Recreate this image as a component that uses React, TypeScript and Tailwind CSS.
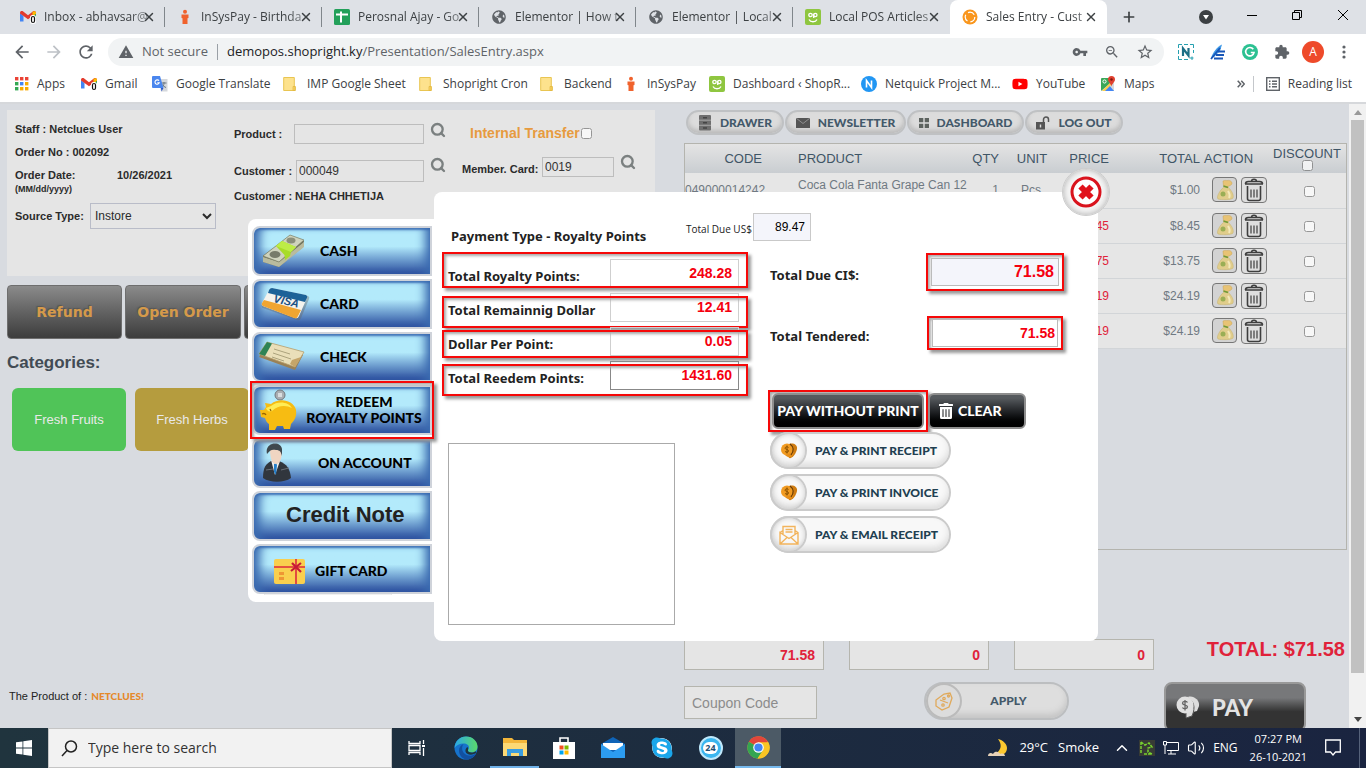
import type { ReactNode } from "react";
import { Search, X, Plus, ChevronUp, Volume2 } from "lucide-react";
import { FaSkype, FaTrashAlt, FaYoutube, FaGlobeAmericas } from "react-icons/fa";
import {
  MdArrowBack,
  MdArrowForward,
  MdExtension,
  MdRefresh,
  MdStarBorder,
  MdVpnKey,
  MdWarning,
  MdZoomOut,
} from "react-icons/md";

const ui = "font-['Open_Sans',sans-serif]";
const label = "font-['Lato',sans-serif] font-black";

/* ---------- favicons ---------- */

function GmailIcon() {
  return (
    <svg viewBox="0 0 16 16" className="size-4 shrink-0" aria-hidden="true">
      <path d="M0 4v8.500h3.500V7z" fill="#4285f4" />
      <path d="M12.500 7v5.500H16V4z" fill="#34a853" />
      <path d="M0 4.500V4c0-2 2-2.300 3.200-1.400L8 6.200l4.800-3.600C14 1.700 16 2 16 4v.5L8 10.300z" fill="#e33b2e" />
      <path d="M12.500 2.800C14 1.700 16 2 16 4v.7l-3.500 2.600z" fill="#fbbc04" />
      <rect x="10" y="6" width="6" height="9" rx="2.500" fill="#fff" />
      <rect x="11.500" y="7.500" width="3" height="6" rx="1.500" fill="none" stroke="#111" strokeWidth="1.200" />
    </svg>
  );
}

function PersonIcon() {
  return (
    <svg viewBox="0 0 16 16" className="size-4 shrink-0" aria-hidden="true">
      <circle cx="8" cy="2.800" r="2" fill="#f0622d" />
      <path d="M4.500 5.500h7v3.500l-1 .3V15h-5V9.300l-1-.3z" fill="#f0622d" />
    </svg>
  );
}

function SheetIcon() {
  return (
    <svg viewBox="0 0 16 16" className="size-4 shrink-0" aria-hidden="true">
      <rect width="16" height="16" rx="1.500" fill="#23a05a" />
      <path d="M2 5.500h12M7 2.500v11" stroke="#fff" strokeWidth="2" />
    </svg>
  );
}

function OpIcon() {
  return (
    <svg viewBox="0 0 16 16" className="size-4 shrink-0" aria-hidden="true">
      <rect width="16" height="16" rx="2" fill="#8fc640" />
      <circle cx="5.500" cy="6" r="1.700" fill="none" stroke="#fff" strokeWidth="1.300" />
      <circle cx="10.300" cy="6" r="1.700" fill="none" stroke="#fff" strokeWidth="1.300" />
      <path d="M8.700 5v4M4 10.500c1.500 3 6.500 3 8 0" stroke="#fff" strokeWidth="1.300" fill="none" />
    </svg>
  );
}

function SalesIcon() {
  return (
    <svg viewBox="0 0 16 16" className="size-4 shrink-0" aria-hidden="true">
      <circle cx="8" cy="8" r="7.500" fill="#f9961d" />
      <circle cx="8" cy="8" r="4.800" fill="none" stroke="#fff" strokeWidth="1.200" strokeDasharray="7 3" />
    </svg>
  );
}

function TranslateIcon() {
  return (
    <svg viewBox="0 0 16 16" className="size-4 shrink-0" aria-hidden="true">
      <path d="M6 3h9.500v12.500H9z" fill="#d5d8dc" />
      <path d="M9.500 7h5M12 6v1c0 2-1 4-2.500 5M10.500 8.500c.8 1.500 2 2.500 3.500 3" stroke="#6b7680" fill="none" />
      <path d="M1 0h7l3.500 12H1a1 1 0 0 1-1-1V1a1 1 0 0 1 1-1z" fill="#4a86ee" />
      <path d="M9 12h2.500L9.500 15.500z" fill="#2a56c6" />
      <path d="M7 4.800A2.200 2.200 0 1 0 7.300 6.700H5.300" stroke="#fff" strokeWidth="1.100" fill="none" />
    </svg>
  );
}

function FolderIcon() {
  return (
    <svg viewBox="0 0 16 16" className="size-4 shrink-0" aria-hidden="true">
      <path d="M.7 1.500h10.600v9h1v4H.7z" fill="#fde28d" stroke="#e9c552" />
      <path d="M10 14.500v-4h2v4z" fill="#fbd565" stroke="#e0b53c" strokeWidth=".7" />
    </svg>
  );
}

function AppsIcon() {
  const colors = ["#ea4335", "#ea4335", "#ea4335", "#34a853", "#4285f4", "#f9ab00", "#34a853", "#f9ab00", "#f9ab00"];
  return (
    <svg viewBox="0 0 14 14" className="size-3.5 shrink-0" aria-hidden="true">
      {colors.map((c, i) => (
        <rect key={i} x={(i % 3) * 5} y={Math.floor(i / 3) * 5} width="3.400" height="3.400" fill={c} />
      ))}
    </svg>
  );
}

function MapsIcon() {
  return (
    <svg viewBox="0 0 16 16" className="size-4 shrink-0" aria-hidden="true">
      <rect x="1" y="2" width="13" height="13" rx="1" fill="#3aa757" />
      <path d="M1 15 14 4v10a1 1 0 0 1-1 1z" fill="#d6d9dc" />
      <path d="M4 15 9 9l5 6z" fill="#4285f4" />
      <path d="m2 15 10-10 1.500 1.500L5 15z" fill="#fbcf4a" />
      <circle cx="4.500" cy="5.500" r="1.600" fill="none" stroke="#fff" />
      <path d="M11.500 0a3.500 3.500 0 0 1 3.500 3.500c0 2.500-3 4-3.500 7-.5-3-3.500-4.500-3.500-7A3.500 3.500 0 0 1 11.500 0z" fill="#e0402f" />
      <circle cx="11.500" cy="3.500" r="1.200" fill="#7b1710" />
    </svg>
  );
}

function NIcon() {
  return (
    <svg viewBox="0 0 16 16" className="size-4 shrink-0" aria-hidden="true">
      <circle cx="8" cy="8" r="8" fill="#2196f3" />
      <path d="M5.500 11.500v-7l5 7v-7" stroke="#fff" strokeWidth="1.600" fill="none" />
    </svg>
  );
}

/* ---------- browser chrome ---------- */

const globe = <FaGlobeAmericas className="size-4 shrink-0 p-px text-[#5f6368]" />;

const tabs: { title: string; icon: ReactNode }[] = [
  { title: "Inbox - abhavsar@", icon: <GmailIcon /> },
  { title: "InSysPay - Birthda", icon: <PersonIcon /> },
  { title: "Perosnal Ajay - Go", icon: <SheetIcon /> },
  { title: "Elementor | How t", icon: globe },
  { title: "Elementor | Local", icon: globe },
  { title: "Local POS Articles", icon: <OpIcon /> },
  { title: "Sales Entry - Cust", icon: <SalesIcon /> },
];

function TabStrip() {
  return (
    <div className="flex h-[34px] items-end bg-[#dee1e6] pl-2">
      {tabs.map((t, i) => {
        const active = i === tabs.length - 1;
        return (
          <div key={t.title} className={`flex h-full w-[157px] items-center ${active ? "rounded-t-lg bg-white" : ""}`}>
            <div
              className={`flex h-5 flex-1 items-center border-r pr-2 pl-3 ${
                i < tabs.length - 2 ? "border-[#80868b]" : "border-transparent"
              }`}
            >
              {t.icon}
              <span className="ml-2 flex-1 text-xs whitespace-nowrap text-[#3c4043] [mask-image:linear-gradient(to_right,#000_75%,#0003)]">
                {t.title}
              </span>
              <button aria-label="Close tab" className="-ml-4 text-[#3c4043]">
                <X className="size-3.5" strokeWidth={2.500} />
              </button>
            </div>
          </div>
        );
      })}
      <button aria-label="New tab" className="h-full pl-3.5 text-[#3c4043]">
        <Plus className="size-4" strokeWidth={2.500} />
      </button>
      <div className="ml-auto flex h-full items-center gap-[34px] pr-[17px] pb-1 text-black">
        <svg viewBox="0 0 14 14" className="mt-1 size-3.5" aria-hidden="true">
          <circle cx="7" cy="7" r="7" fill="#3c4043" />
          <path d="M4 5h6l-3 4.500z" fill="#fff" />
        </svg>
        <button aria-label="Minimise" className="h-px w-2.5 bg-black" />
        <button aria-label="Restore">
          <svg viewBox="0 0 12 12" className="size-3" fill="none" stroke="#000">
            <path d="M1.500 3.500h7v7h-7zM3.500 3.500v-2h7v7h-2" />
          </svg>
        </button>
        <button aria-label="Close">
          <svg viewBox="0 0 12 12" className="size-3" stroke="#000">
            <path d="m1 1 10 10M11 1 1 11" />
          </svg>
        </button>
      </div>
    </div>
  );
}

function Toolbar() {
  return (
    <div className="flex h-9 items-center bg-white pr-4 pl-3 text-[#5f6368]">
      <div className="flex w-24 items-center gap-3">
        <button aria-label="Back">
          <MdArrowBack className="size-5" />
        </button>
        <button aria-label="Forward" className="text-[#bdc1c6]">
          <MdArrowForward className="size-5" />
        </button>
        <button aria-label="Reload">
          <MdRefresh className="size-5" />
        </button>
      </div>
      <div className="flex h-7 flex-1 items-center rounded-full bg-[#f1f3f4] px-2.5 text-[13px]">
        <MdWarning className="size-4" />
        <span className="ml-2">Not secure</span>
        <span className="mx-[9px] h-4 w-px bg-[#9aa0a6]" />
        <span className="text-[#202124]">demopos.shopright.ky</span>
        <span>/Presentation/SalesEntry.aspx</span>
        <span className="ml-auto flex items-center gap-4">
          <MdVpnKey className="size-4" />
          <MdZoomOut className="size-4" />
          <MdStarBorder className="size-[18px]" />
        </span>
      </div>
      <div className="flex items-center gap-4 pl-3.5">
        <svg viewBox="0 0 16 16" className="size-4" aria-hidden="true">
          <path d="M.5 4V.5H4M6 .5h4M12 .5h3.500V4M15.500 6v3M.5 6v4M.5 12v3.500H4M6 15.500h4M12 14h3.500M14 12.500V16" fill="none" stroke="#25a0b0" />
          <path d="M5 12V4.500l5.500 7V4" stroke="#1d6f86" strokeWidth="2.200" fill="none" />
        </svg>
        <svg viewBox="0 0 16 16" className="size-4" aria-hidden="true">
          <path d="M1 14C3 8 7 3 12 .5L10 7l-6 6z" fill="#3f9ae8" />
          <path d="M4 14.500h9M6 11h8M8 7.500h7M1 15 10 4" stroke="#1856b8" strokeWidth="1.800" />
        </svg>
        <svg viewBox="0 0 16 16" className="size-4" aria-hidden="true">
          <circle cx="8" cy="8" r="8" fill="#2cc192" />
          <path d="M11.300 5.200A4.200 4.200 0 1 0 12 8.500H8.800" stroke="#fff" strokeWidth="1.600" fill="none" />
        </svg>
        <MdExtension className="size-4" />
        <span className="-mx-1 flex size-[22px] items-center justify-center rounded-full bg-[#ee4a2a] text-xs text-white">A</span>
        <svg viewBox="0 0 4 14" className="mr-1 ml-1.5 h-3.5 w-1" fill="#5f6368" aria-hidden="true">
          <circle cx="2" cy="2" r="1.600" />
          <circle cx="2" cy="7" r="1.600" />
          <circle cx="2" cy="12" r="1.600" />
        </svg>
      </div>
    </div>
  );
}

const bookmarks: { name: string; icon: ReactNode; width: string }[] = [
  { name: "Apps", icon: <AppsIcon />, width: "w-[66px]" },
  { name: "Gmail", icon: <GmailIcon />, width: "w-[71px]" },
  { name: "Google Translate", icon: <TranslateIcon />, width: "w-[131px]" },
  { name: "IMP Google Sheet", icon: <FolderIcon />, width: "w-[136px]" },
  { name: "Shopright Cron", icon: <FolderIcon />, width: "w-[121px]" },
  { name: "Backend", icon: <FolderIcon />, width: "w-[83px]" },
  { name: "InSysPay", icon: <PersonIcon />, width: "w-[86px]" },
  { name: "Dashboard ‹ ShopR...", icon: <OpIcon />, width: "w-[152px]" },
  { name: "Netquick Project M...", icon: <NIcon />, width: "w-[151px]" },
  { name: "YouTube", icon: <FaYoutube className="size-4 shrink-0 text-[#f00]" />, width: "w-[88px]" },
  { name: "Maps", icon: <MapsIcon />, width: "w-[60px]" },
];

function Bookmarks() {
  return (
    <nav className="flex h-[34px] items-center border-b-2 border-[#d6d8db] bg-white pb-1 pl-[15px] text-xs whitespace-nowrap text-[#3c4043]">
      {bookmarks.map((b) => (
        <a key={b.name} href="#" className={`flex items-center gap-2 ${b.width}`}>
          {b.icon}
          {b.name}
        </a>
      ))}
      <div className="ml-auto flex items-center gap-2 pr-3.5">
        <svg viewBox="0 0 8 8" className="size-2" fill="none" stroke="#5f6368" strokeWidth="1.500" aria-hidden="true">
          <path d="m.7.7 3 3.300-3 3.300M4.300.7l3 3.300-3 3.300" />
        </svg>
        <span className="h-4 w-px bg-[#c4c7cb]" />
        <svg viewBox="0 0 14 14" className="ml-1 size-3.5" fill="none" stroke="#5f6368" strokeWidth="1.400" aria-hidden="true">
          <rect x=".7" y=".7" width="12.600" height="12.600" />
          <path d="M3 4.200h1.500M6 4.200h5M3 7h1.500M6 7h5M3 9.800h1.500M6 9.800h5" />
        </svg>
        <span>Reading list</span>
      </div>
    </nav>
  );
}

/* ---------- left part of the sales page ---------- */

const field = "border border-[#bdbdbd] bg-[#e5e5e5] px-0.5 text-xs font-normal text-[#333]";

function Magnifier() {
  return (
    <button aria-label="Search" className="text-[#7b8080]">
      <Search className="size-4" strokeWidth={3.500} />
    </button>
  );
}

function OrderPanel() {
  return (
    <section className="flex h-[166px] bg-[#e5e5e5] pl-2 text-[11px] font-bold text-[#2b2b2b]">
      <div className="w-[219px] pt-2">
        <p className="leading-[23px]">Staff : Netclues User</p>
        <p className="leading-[23px]">Order No : 002092</p>
        <p className="flex leading-[23px]">
          <span className="w-[102px]">Order Date:</span>10/26/2021
        </p>
        <p className="text-[9px] leading-1">(MM/dd/yyyy)</p>
        <div className="mt-3 flex items-center">
          <label htmlFor="source" className="w-[75px]">
            Source Type:
          </label>
          <select id="source" className="h-[26px] w-[126px] border border-[#b9bcc8] bg-[#e5e5e5] text-xs font-normal" defaultValue="Instore">
            <option>Instore</option>
          </select>
        </div>
      </div>
      <div className="w-[228px] pt-3.5">
        <div className="flex h-5 items-center justify-between pr-4">
          <label htmlFor="product" className="w-[58px]">
            Product :
          </label>
          <input id="product" className={`h-5 w-[130px] ${field}`} />
          <span className="flex pb-2 pl-1">
            <Magnifier />
          </span>
        </div>
        <div className="mt-4 flex h-[22px] items-center justify-between pr-4">
          <label htmlFor="customer" className="w-[60px]">
            Customer :
          </label>
          <input id="customer" defaultValue="000049" className={`h-[22px] w-[128px] ${field}`} />
          <span className="flex pb-3 pl-1">
            <Magnifier />
          </span>
        </div>
        <p className="mt-1.5 leading-[17px]">Customer : NEHA CHHETIJA</p>
      </div>
      <div className="pt-3.5">
        <label className="flex h-[18px] items-center gap-px pl-2 text-sm text-[#e79b3f]">
          Internal Transfer
          <input type="checkbox" className="size-[11px] opacity-70" />
        </label>
        <div className="mt-3 flex items-center">
          <label htmlFor="member" className="w-20 pt-1">
            Member. Card:
          </label>
          <input id="member" defaultValue="0019" className={`h-5 w-[72px] ${field}`} />
          <span className="flex pb-2.5 pl-1.5">
            <Magnifier />
          </span>
        </div>
      </div>
    </section>
  );
}

const darkButton =
  "h-[54px] shrink-0 rounded-sm border border-[#6e6e6e] bg-linear-to-b from-[#8b8b8b] to-[#3d3d3d] font-['DejaVu_Sans',Verdana,sans-serif] text-sm font-bold text-[#d59a4a] [text-shadow:-1px_-1px_1px_#555]";

function LeftColumn() {
  return (
    <div className="flex w-[648px] shrink-0 flex-col">
      <OrderPanel />
      <div className="mt-[9px] flex gap-[3px]">
        <button className={`w-[115px] ${darkButton}`}>Refund</button>
        <button className={`w-[116px] ${darkButton}`}>Open Order</button>
        <button className={`w-[116px] ${darkButton}`} aria-label="Hold" />
      </div>
      <h2 className="mt-3 text-[17px] leading-6 font-bold text-[#424b54]">Categories:</h2>
      <div className="mt-[13px] flex gap-[9px] pl-[5px] text-[13px] text-[#e9e9e9]">
        <button className="h-[63px] w-[114px] rounded-md bg-[#50c458]">Fresh Fruits</button>
        <button className="h-[63px] w-[114px] rounded-md bg-[#b59c3e]">Fresh Herbs</button>
      </div>
      <footer className="mt-auto flex items-center gap-1 pb-6 pl-0.5 text-[11px] text-[#222]">
        The Product of :
        <span className={`text-[10px] leading-4 text-[#e5892a] ${label}`}>NETCLUES!</span>
      </footer>
    </div>
  );
}

/* ---------- right part of the sales page ---------- */

const navIcons: Record<string, ReactNode> = {
  DRAWER: (
    <svg viewBox="0 0 14 16" className="h-4 w-3.5" aria-hidden="true">
      <rect x="1" y="0" width="12" height="15.500" rx="1" fill="#6e6e6e" />
      <path d="M1 5.200h12M1 10.300h12" stroke="#a5a5a5" />
      <path d="M5 2.700h4M5 7.800h4M5 13h4" stroke="#444" strokeWidth="1.500" />
    </svg>
  ),
  NEWSLETTER: (
    <svg viewBox="0 0 14 10" className="h-2.5 w-3.5" aria-hidden="true">
      <path d="M0 0h14v10H0z" fill="#555" />
      <path d="m0 0 7 5.500L14 0" fill="none" stroke="#8f8f8f" />
    </svg>
  ),
  DASHBOARD: (
    <svg viewBox="0 0 10 10" className="size-2.5" fill="#5d635f" aria-hidden="true">
      <path d="M0 0h4.300v4.300H0zM5.700 0H10v4.300H5.700zM0 5.700h4.300V10H0zM5.700 5.700H10V10H5.700z" />
    </svg>
  ),
  "LOG OUT": (
    <svg viewBox="0 0 14 14" className="size-3.5" aria-hidden="true">
      <path d="M0 6h9v7.500H0z" fill="#555" />
      <path d="M7.500 7V3.500a2.500 2.500 0 0 1 5 0V6" fill="none" stroke="#555" strokeWidth="1.500" />
      <path d="M4.500 8.500v3" stroke="#ddd" strokeWidth="1.400" />
    </svg>
  ),
};

const navItems = [
  { name: "DRAWER", width: "w-[98px]" },
  { name: "NEWSLETTER", width: "w-[121px]" },
  { name: "DASHBOARD", width: "w-[117px]" },
  { name: "LOG OUT", width: "w-[98px]" },
];

const rows = [
  { code: "049000014242", name: "Coca Cola Fanta Grape Can 12", price: "$1.00", total: "$1.00" },
  { code: "", name: "", price: "$8.45", total: "$8.45" },
  { code: "", name: "", price: "$13.75", total: "$13.75" },
  { code: "", name: "", price: "$24.19", total: "$24.19" },
  { code: "", name: "", price: "$24.19", total: "$24.19" },
];

function MoneyBag() {
  return (
    <svg viewBox="0 0 22 22" className="size-[22px]" aria-hidden="true">
      <path d="M9 2c2-1 3-.5 4-.3 2-1 5 .5 5 2.500s-3 2.500-5 4l-3.500-1z" fill="#e8c374" stroke="#cba552" strokeWidth=".5" />
      <path d="M10 8h4c4 4 6 8 5 11-1 2-12 2-15 1-2-2 2-9 6-12z" fill="#e0cd8b" stroke="#c7b06a" strokeWidth=".5" />
      <path d="m9.500 7 4.500 1.500" stroke="#6f9a36" strokeWidth="1.500" />
      <circle cx="9" cy="15" r="2.500" fill="#9aae55" />
      <path d="M14 12c2 3 2 5 1 7" stroke="#f4e9bb" strokeWidth="2" fill="none" />
    </svg>
  );
}

function Bin() {
  return (
    <svg viewBox="0 0 22 24" className="h-6 w-[22px]" fill="none" stroke="#3e3e3e" strokeWidth="1.600" aria-hidden="true">
      <path d="M2 6h18M2.500 6c0-2 1-2.500 3-2.500h11c2 0 3 .5 3 2.500M8.500 3.500c0-3 5-3 5 0M4.500 8v12.500c0 1.500.5 2 2 2h9c1.500 0 2-.5 2-2V8" />
      <path d="M8 11.500v8M11 11.500v8M14 11.500v8" strokeWidth="1.200" />
    </svg>
  );
}

function ItemsTable() {
  return (
    <div className="mt-2 h-[407px] border border-[#b4b4ae]">
      <table className="w-full table-fixed text-xs text-[#6f7982]">
        <colgroup>
          <col className="w-[77px]" />
          <col className="w-[210px]" />
          <col className="w-[27px]" />
          <col className="w-[54px]" />
          <col className="w-[56px]" />
          <col className="w-[91px]" />
          <col className="w-[68px]" />
          <col />
        </colgroup>
        <thead>
          <tr className="h-[29px] bg-linear-to-b from-[#e4e4e4] to-[#c9cdd1] text-[13px] text-[#3f5566] [&>th]:p-0 [&>th]:font-normal">
            <th className="text-right">CODE</th>
            <th className="text-left">
              <span className="pl-9">PRODUCT</span>
            </th>
            <th className="text-right">QTY</th>
            <th>
              <span className="pl-3">UNIT</span>
            </th>
            <th className="text-right">PRICE</th>
            <th className="text-right">TOTAL</th>
            <th className="text-left">
              <span className="pl-1">ACTION</span>
            </th>
            <th className="leading-none">
              <label className="flex flex-col items-center">
                DISCOUNT
                <input type="checkbox" className="size-[11px] opacity-70" />
              </label>
            </th>
          </tr>
        </thead>
        <tbody>
          {rows.map((r, i) => (
            <tr key={i} className="h-[35px] border-b border-[#d2d5d8] bg-[#e6e6e6] [&>td]:p-0">
              <td className="text-right">{r.code}</td>
              <td>
                <div className="h-[30px] pl-9 leading-5 whitespace-nowrap">{r.name}</div>
              </td>
              <td className="text-right">{i === 0 ? "1" : ""}</td>
              <td className="text-center">
                <span className="pl-2.5">{i === 0 ? "Pcs" : ""}</span>
              </td>
              <td className="text-right text-[#e0223a]">{r.price}</td>
              <td className="text-right">{r.total}</td>
              <td>
                <div className="flex gap-1 pl-3">
                  <button aria-label="Price" className="flex size-[25px] items-center justify-center rounded-sm border border-[#777] bg-[#d3d3d3]">
                    <MoneyBag />
                  </button>
                  <button aria-label="Delete" className="flex h-[26px] w-[26px] items-center justify-center rounded-sm border border-[#777] bg-[#dedede]">
                    <Bin />
                  </button>
                </div>
              </td>
              <td className="text-center">
                <input type="checkbox" aria-label="Discount" className="ml-1 size-[11px] align-middle opacity-70" />
              </td>
            </tr>
          ))}
        </tbody>
      </table>
    </div>
  );
}

const totals = ["71.58", "0", "0"];

function RightColumn() {
  return (
    <div className="w-[663px]">
      <nav className="flex h-[25px] gap-px pl-0.5">
        {navItems.map((n) => (
          <button
            key={n.name}
            className={`flex items-center justify-center gap-2 rounded-full border-2 border-[#bfc1c3] bg-[#dcdcdc] text-xs text-[#43596a] shadow-[inset_0_-3px_4px_#bbb] ${label} ${n.width}`}
          >
            {navIcons[n.name]}
            {n.name}
          </button>
        ))}
      </nav>
      <ItemsTable />
      <div className="mt-[89px] flex gap-[25px]">
        {totals.map((t, i) => (
          <input
            key={i}
            aria-label={`Amount ${i + 1}`}
            defaultValue={t}
            className="h-[31px] w-[140px] border border-[#b5b5ae] bg-[#e5e5e5] px-2 text-right text-sm font-bold text-[#e0223a]"
          />
        ))}
        <p className="ml-auto pr-0.5 text-[20px] leading-5 font-bold whitespace-nowrap text-[#e0223a]">TOTAL: $71.58</p>
      </div>
      <div className="mt-3 flex items-start">
        <input
          aria-label="Coupon Code"
          placeholder="Coupon Code"
          className="mt-1 h-[33px] w-[133px] border border-[#b5b5ae] bg-[#e5e5e5] px-[7px] text-sm placeholder:text-[#8c8c8c]"
        />
        <button className={`ml-[107px] flex h-[38px] w-[145px] items-center rounded-full border-2 border-[#bcbec0] bg-[#dedede] text-xs text-[#45596a] shadow-[inset_0_-4px_6px_#c4c4c4] ${label}`}>
          <span className="flex size-9 items-center justify-center rounded-full border-2 border-[#bbb] bg-[#dcdcdc]">
            <svg viewBox="0 0 20 20" className="size-5" fill="none" stroke="#e0a95a" strokeWidth="1.300" aria-hidden="true">
              <path d="m2 9 8-6 6-1 2 5-3 9-7 3-6-4zM6 9l8 3" />
              <circle cx="10" cy="7.500" r="1.200" />
              <circle cx="9" cy="14" r="1.200" />
              <circle cx="14.500" cy="5" r="1" />
            </svg>
          </span>
          <span className="flex-1 pr-3">APPLY</span>
        </button>
        <button className={`ml-[95px] flex h-[50px] w-[142px] items-center gap-3 rounded-lg border-2 border-[#999] bg-linear-to-b from-[#77787a] from-30% to-[#333] to-60% pl-2.5 text-[22px] text-[#e3e3e3] ${label}`}>
          <svg viewBox="0 0 24 24" className="size-6" aria-hidden="true">
            <path d="M12 2c5-2 12 3 11 9l-2 5-4 1z" fill="#ddd" />
            <path d="M10 2c8 3 10 10 6 19l-6 2z" fill="#ddd" stroke="#555" />
            <circle cx="9" cy="10" r="8.500" fill="#e0e0e0" />
            <path d="M11.500 7.500c-1-1.500-5-1.500-5 .8s5 1.200 5 3.500-4 2.500-5 .7M9 5v10.500" stroke="#666" strokeWidth="1.300" fill="none" />
          </svg>
          PAY
        </button>
      </div>
    </div>
  );
}

/* ---------- payment dialog ---------- */

function CashArt() {
  return (
    <svg viewBox="0 0 46 36" className="h-9 w-[46px]" aria-hidden="true">
      <path d="M3 23 30 3l14 5-1 6-24 20L3 29z" fill="#6d705c" />
      <path d="M3 24v5l16 5v-5zM19 29l25-20v5L19 34z" fill="#b9bb9e" />
      <path d="M3 23 30 2l14 5-25 22z" fill="#cfd3bd" stroke="#777b62" strokeWidth=".7" />
      <ellipse cx="31" cy="7.500" rx="4.500" ry="3" fill="#8b8f7b" />
      <ellipse cx="15" cy="21.500" rx="5.500" ry="3.500" fill="#777b6a" />
      <path d="m16 13 6-5 14 6-5 5-1 4-5 4-.5-5z" fill="#a8dc28" />
      <path d="m22 8 14 6-5 5-15-6z" fill="#bdec46" />
    </svg>
  );
}

function CardArt() {
  return (
    <svg viewBox="0 0 50 36" className="h-9 w-[50px]" aria-hidden="true">
      <path d="M13 3 48 10q2 1 1 3l-8 19q-1 3-4 2L3 22q-2-1-1-4L9 5q1-3 4-2z" fill="#666" opacity=".4" />
      <path d="M12 2 46 9q2 1 1 3l-8 18q-1 3-4 2L3 20q-2-1-1-3L9 4q1-2 3-2z" fill="#f4f3ee" />
      <path d="M12 2 46 9q2 1 1 3l-2 4L8 7l1-3q1-2 3-2z" fill="#1c6298" />
      <path d="m4 14 37 10-3 6q-1 3-4 2L3 20q-2-1-1-3z" fill="#f0a531" />
      <text x="13" y="16" transform="rotate(13 13 16)" fontFamily="Liberation Sans" fontStyle="italic" fontWeight="700" fontSize="11" fill="#1c5183">VISA</text>
    </svg>
  );
}

function CheckArt() {
  return (
    <svg viewBox="0 0 48 32" className="h-8 w-12" aria-hidden="true">
      <path d="M9 2 45 14l-8 15L1 16z" fill="#9a8156" />
      <path d="m9 1 37 10-9 15L1 13z" fill="#eadfb9" stroke="#b69d69" strokeWidth=".8" />
      <path d="m9 1 5 1.500L7 15l-6-2z" fill="#2e8355" />
      <path d="m16 8 16 5M15 12l18 6M14 16l12 4" stroke="#9c936d" strokeWidth=".8" />
      <path d="m34 19 9-3-6 10-5-3z" fill="#c5a569" />
    </svg>
  );
}

function PiggyArt() {
  return (
    <svg viewBox="0 0 40 42" className="h-[42px] w-10" aria-hidden="true">
      <circle cx="22" cy="6" r="5" fill="#aaaeb2" stroke="#71777d" />
      <path d="M20 4h4v4h-4z" fill="#d9dddf" />
      <path d="m7 14 6 1c8-7 23-4 25 6 1 7-2 11-5 14l-1 5h-6l-1-3h-6l-2 4h-6v-6c-2-1-3-3-4-6l-4-1-1-7h4l2-3z" fill="#f7bc12" />
      <path d="M13 17c7-6 18-4 21 2-6-3-14-3-20 3-3 1-5 0-6-3z" fill="#ffec55" />
      <path d="M4 25c2-1 3-1 4 1M12 20l1 2" stroke="#996500" strokeWidth="1.300" fill="none" />
    </svg>
  );
}

function PersonArt() {
  return (
    <svg viewBox="0 0 32 40" className="h-10 w-8" aria-hidden="true">
      <path d="M1 35c0-11 3-14 8-17h8c8 3 11 8 12 17-7 5-21 5-28 0z" fill="#31363d" />
      <path d="m9 17 4 15 5-14-4 3z" fill="#eee" />
      <path d="m12 21 2-1 1 2-1 10-2-3z" fill="#267ec8" />
      <path d="M8 6h12c0 9-2 15-6 15S8 15 8 6z" fill="#f0d5c2" />
      <path d="M5 11C2-1 19-3 20 6v7c-1-4-2-6-6-6-4-1-6 0-9 4z" fill="#3f484e" />
      <path d="m19 27 8-2M4 27l7-1" stroke="#697078" />
    </svg>
  );
}

function GiftArt() {
  return (
    <svg viewBox="0 0 31 25" className="h-[25px] w-[31px]" aria-hidden="true">
      <rect width="31" height="25" rx="2" fill="#f9cf4e" />
      <path d="M0 8h31M22 0v25" stroke="#dd2a3d" strokeWidth="1.600" />
      <path d="m22 8-4-4M22 8l5-4M22 8l-5 4M22 8l5 5" stroke="#c71937" strokeWidth="2.200" />
      <path d="M5 13h5v3H5zM5 18h5v3H5z" fill="#ee9634" />
    </svg>
  );
}

const payTypes: { name: string; art?: ReactNode; pad: string; text: string }[] = [
  { name: "CASH", art: <CashArt />, pad: "pl-1.5 gap-3.5", text: "text-sm text-black" },
  { name: "CARD", art: <CardArt />, pad: "pl-1.5 gap-2.5", text: "text-sm text-black" },
  { name: "CHECK", art: <CheckArt />, pad: "pl-1 gap-3.5", text: "text-sm text-black" },
  {
    name: "REDEEM\nROYALTY POINTS",
    art: <PiggyArt />,
    pad: "pl-1",
    text: "flex-1 text-center text-sm leading-4 whitespace-pre text-black",
  },
  { name: "ON ACCOUNT", art: <PersonArt />, pad: "pl-2 gap-6", text: "text-sm text-black" },
  { name: "Credit Note", pad: "pl-8 pb-1", text: "font-['Liberation_Sans',sans-serif] text-[22px] font-bold text-[#222]" },
  { name: "GIFT CARD", art: <GiftArt />, pad: "pl-5 pt-1 gap-2.5", text: "text-sm text-black" },
];

const callout = "border-2 border-[#f60808] shadow-[3px_3px_3px_#999,inset_2px_2px_3px_#aaa]";

function PaySidebar() {
  return (
    <aside className="mt-[27px] h-[383px] w-[186px] rounded-lg rounded-r-none bg-white pt-[7px] pr-0.5 pb-[7px] pl-1">
      <ul className="flex flex-col gap-[3px]">
        {payTypes.map((p) => (
          <li key={p.name} className="relative">
            <button
              className={`flex h-[50px] w-full items-center rounded-l-lg border-2 border-[#cfd3da] bg-linear-to-b from-[#b3eafb] from-40% to-[#2c4c9c] text-left shadow-[inset_10px_0_10px_-4px_#3b6bb0,inset_-10px_0_10px_-5px_#3b6bb0,inset_0_2px_2px_#4c7fc0] ${label} ${p.pad}`}
            >
              {p.art}
              <span className={p.text}>{p.name}</span>
            </button>
            {p.name.startsWith("REDEEM") && (
              <span className={`pointer-events-none absolute -inset-x-0.5 -top-1 -bottom-1 z-10 ${callout}`} />
            )}
          </li>
        ))}
        <li className="-mt-1.5 mr-10 ml-3 h-1 rounded-t-full border-t-2 border-[#c5c5c5] bg-[#f0f0f0]" />
      </ul>
    </aside>
  );
}

const strong = "font-['Noto_Sans',sans-serif] text-[13px] font-bold";

const pointRows = [
  { name: "Total Royalty Points:", value: "248.28", box: "-top-1.5 h-9", input: "border-[#cfcfcf]" },
  { name: "Total Remainnig Dollar", value: "12.41", box: "top-1 h-8", input: "border-[#cfcfcf]" },
  { name: "Dollar Per Point:", value: "0.05", box: "top-1 h-7", input: "border-[#cfcfcf]" },
  { name: "Total Reedem Points:", value: "1431.60", box: "top-1 h-8", input: "border-[#888]" },
];

function CoinsIcon() {
  return (
    <svg viewBox="0 0 18 18" className="size-[18px]" aria-hidden="true">
      <path d="M8 3c3-3 10-1 9 4-1 5-5 10-8 9z" fill="#cf7d12" />
      <circle cx="7" cy="7.500" r="6" fill="#f19b22" />
      <path d="M5 13c4 4 8 3 9-3" fill="#e58d19" />
      <path d="M8.500 5.500C7.500 4.300 5 4.800 5 6.200s3.500 1 3.500 2.700-2.500 1.700-3.500.5M7 3.500v8" stroke="#8a5000" fill="none" />
      <path d="M10 2c4 3 4 7 1 11" stroke="#673b08" strokeWidth="1.200" fill="none" />
    </svg>
  );
}

function MailIcon() {
  return (
    <svg viewBox="0 0 20 20" className="size-5" fill="none" stroke="#f2b45c" strokeWidth="1.400" aria-hidden="true">
      <path d="M1 7.500 4 5.500M16 5.500l3 2V19H1V7.500l9 6 9-6M4 9.500V1.500h12v8M6.500 4.500h7M6.500 7h7M1 19l7-6.500M19 19l-7-6.500" />
    </svg>
  );
}

const payActions = [
  { name: "PAY & PRINT RECEIPT", icon: <CoinsIcon /> },
  { name: "PAY & PRINT INVOICE", icon: <CoinsIcon /> },
  { name: "PAY & EMAIL RECEIPT", icon: <MailIcon /> },
];

const blackButton =
  "flex h-9 items-center rounded-md border-2 border-[#8e8e8e] bg-linear-to-b from-[#565a5e] from-10% via-[#1d1f22] via-55% to-black text-white";

function PaymentDialog() {
  return (
    <div role="dialog" aria-label="Payment" className="absolute top-[88px] left-[248px] z-10 flex items-start">
      <PaySidebar />
      <div className={`relative flex h-[449px] w-[664px] rounded-lg bg-white pl-3.5 text-[#222] ${ui}`}>
        <div className="w-[322px]">
          <h2 className={`h-[66px] pt-[34px] pl-[3px] leading-5 ${strong}`}>Payment Type - Royalty Points</h2>
          <div className="flex flex-col gap-1">
            {pointRows.map((r, i) => (
              <div key={r.name} className="relative flex h-[30px] items-center">
                <label htmlFor={`points-${i}`} className={`w-[162px] pt-2 whitespace-nowrap ${strong}`}>
                  {r.name}
                </label>
                <input
                  id={`points-${i}`}
                  defaultValue={r.value}
                  className={`h-[29px] w-[129px] border px-1.5 text-right font-['Liberation_Sans',sans-serif] text-sm font-bold text-[#f5000f] ${r.input}`}
                />
                <span className={`pointer-events-none absolute -left-1.5 w-[306px] ${r.box} ${callout}`} />
              </div>
            ))}
          </div>
          <textarea aria-label="Notes" className="mt-[53px] h-[182px] w-[227px] resize-none border border-[#aaa]" />
        </div>
        <div>
          <div className="-ml-[84px] flex h-[66px] items-start gap-[3px] pt-[21px]">
            <label htmlFor="due-us" className="w-16 pt-2 text-[10px] leading-4 whitespace-nowrap">
              Total Due US$
            </label>
            <input
              id="due-us"
              defaultValue="89.47"
              className="h-7 w-[58px] border border-[#c9c9c9] bg-[#f4f5fb] px-[5px] text-right font-['Liberation_Sans',sans-serif] text-xs text-black"
            />
          </div>
          <div className="-mt-[5px] flex items-center">
            <label htmlFor="due-ci" className={`w-[156px] pt-2 ${strong}`}>
              Total Due CI$:
            </label>
            <span className={`p-[3px] ${callout}`}>
              <input
                id="due-ci"
                defaultValue="71.58"
                className="block h-7 w-32 border border-[#bbb] bg-[#f4f5fb] px-1 text-right font-['Liberation_Sans',sans-serif] text-base font-bold text-[#f5000f]"
              />
            </span>
          </div>
          <div className="mt-[25px] flex items-center">
            <label htmlFor="tendered" className={`w-[157px] pt-2 ${strong}`}>
              Total Tendered:
            </label>
            <span className={`px-[3px] py-px ${callout}`}>
              <input
                id="tendered"
                defaultValue="71.58"
                className="block h-7 w-[126px] border border-[#bbb] bg-white px-0.5 text-right font-['Liberation_Sans',sans-serif] text-sm font-bold text-[#f5000f]"
              />
            </span>
          </div>
          <div className={`mt-10 -ml-0.5 flex items-center ${label}`}>
            <span className={`px-0.5 py-px ${callout}`}>
              <button className={`w-[152px] justify-center text-sm whitespace-nowrap ${blackButton}`}>PAY WITHOUT PRINT</button>
            </span>
            <button className={`w-[98px] gap-1 pl-2 text-sm ${blackButton}`}>
              <FaTrashAlt className="size-4" />
              CLEAR
            </button>
          </div>
          <div className="flex flex-col gap-[5px]">
            {payActions.map((a) => (
              <button
                key={a.name}
                className={`flex h-[37px] w-[181px] items-center gap-2 rounded-full border-2 border-[#cbcbcb] bg-[#f8f8f8] text-xs whitespace-nowrap text-[#213f51] shadow-[inset_0_-4px_6px_#ddd] ${label}`}
              >
                <span className="-ml-0.5 flex size-[37px] shrink-0 items-center justify-center rounded-full border-2 border-[#cbcbcb] shadow-[inset_0_0_5px_#ccc]">
                  {a.icon}
                </span>
                {a.name}
              </button>
            ))}
          </div>
        </div>
        <button
          aria-label="Close"
          className="absolute -top-6 -right-3 flex size-12 items-center justify-center rounded-full border border-[#ccc] bg-[#f5f5f5] shadow-[inset_0_0_6px_#aaa]"
        >
          <svg viewBox="0 0 32 32" className="size-8">
            <circle cx="16" cy="16" r="14" fill="#fff" stroke="#d9131d" strokeWidth="3" />
            <path d="m10.500 10.500 11 11M21.500 10.500l-11 11" stroke="#e0121c" strokeWidth="6" />
          </svg>
        </button>
      </div>
    </div>
  );
}

function ScrollBar() {
  return (
    <div className="flex w-[17px] shrink-0 flex-col items-center bg-[#f1f1f1] py-1.5">
      <svg viewBox="0 0 8 5" className="h-[5px] w-2" aria-hidden="true">
        <path d="m0 5 4-5 4 5z" fill="#999" />
      </svg>
      <div className="mt-[5px] mb-auto h-[553px] w-[13px] bg-[#c1c1c1]" />
      <svg viewBox="0 0 8 5" className="h-[5px] w-2" aria-hidden="true">
        <path d="m0 0 4 5 4-5z" fill="#444" />
      </svg>
    </div>
  );
}

/* ---------- taskbar ---------- */

const slot = "flex h-10 w-[49px] items-center justify-center";

function TaskBar() {
  return (
    <footer className={`flex h-10 shrink-0 items-center bg-linear-to-r from-[#20343e] to-[#1a2440] text-white ${ui}`}>
      <button aria-label="Start" className="flex w-12 justify-center">
        <svg viewBox="0 0 16 16" className="size-4" fill="#fff">
          <path d="m0 2.300 6.500-.9v6.200H0zM7.300 1.300 16 0v7.600H7.300zM0 8.400h6.500v6.200L0 13.700zM7.300 8.400H16V16l-8.700-1.300z" />
        </svg>
      </button>
      <label className="flex h-10 w-[344px] items-center gap-2.5 border border-[#c5c5c5] bg-[#f2f2f2] px-3 text-[#222]">
        <svg viewBox="0 0 17 17" className="size-[17px]" fill="none" stroke="#222" strokeWidth="1.500" aria-hidden="true">
          <circle cx="10" cy="6.500" r="5.500" />
          <path d="m6 10.500-5 5.500" />
        </svg>
        <input
          aria-label="Search"
          placeholder="Type here to search"
          className="flex-1 bg-transparent text-sm outline-none placeholder:text-[#333]"
        />
      </label>
      <button aria-label="Task view" className={slot}>
        <svg viewBox="0 0 18 16" className="h-4 w-[18px]" fill="none" stroke="#fff" strokeWidth="1.300">
          <path d="M1 1v2.500h11V1M1 15v-2.500h11V15M1 5.500h11v5H1zM15.500 0v4M15.500 8v8" />
          <path d="M14 5h3v2h-3z" fill="#fff" stroke="none" />
        </svg>
      </button>
      <button aria-label="Edge" className={slot}>
        <svg viewBox="0 0 24 24" className="size-6">
          <defs>
            <linearGradient id="edge-top" x1="0" x2="1">
              <stop offset="0" stopColor="#2aa8e8" />
              <stop offset="1" stopColor="#5bd96a" />
            </linearGradient>
          </defs>
          <circle cx="12" cy="12" r="11.500" fill="#1673cc" />
          <path d="M.5 12C1 5 6 .5 12 .5c7 0 11.500 5 11.500 10 0 4-3 6-6 6-2.500 0-4-1-3.500-2.500.7-1 1-1.500 1-2.500 0-2-2-4-5.500-4-4 0-7 1.500-9 4.500z" fill="url(#edge-top)" />
          <path d="M9.500 8c-3 4-1 10.500 5 11.500 3 .5 5.500-.5 7.500-2-2 4-6 6-10 6-4-1-7-4.500-7-9 0-3 2-5.500 4.500-6.500z" fill="#1250a0" />
          <path d="M14 14c-.5 1.500 1 2.500 3.500 2.500 1.500 0 3-.5 4-1.300l1 1.300c-3 3-10 3-11-1-.3-2 .5-3.500 2-4.500.7 1 .8 2 .5 3z" fill="#1f3440" />
        </svg>
      </button>
      <button aria-label="File Explorer" className={`${slot} border-b-2 border-[#6fb1e8]`}>
        <svg viewBox="0 0 24 20" className="h-5 w-6">
          <path d="M0 1h9l2 2h13v16H0z" fill="#f3b63a" />
          <path d="M0 6h24v13H0z" fill="#fcd975" />
          <path d="M4 19v-7h16v7h-4v-3H8v3z" fill="#3a9de0" />
        </svg>
      </button>
      <button aria-label="Store" className={slot}>
        <svg viewBox="0 0 24 24" className="size-6">
          <path d="M8 6V2h8v4" stroke="#fff" strokeWidth="1.600" fill="none" />
          <path d="M1 6h22v17H1z" fill="#fff" />
          <path d="M7.500 9.500h4v4h-4z" fill="#f25022" />
          <path d="M12.500 9.500h4v4h-4z" fill="#7fba00" />
          <path d="M7.500 14.500h4v4h-4z" fill="#00a4ef" />
          <path d="M12.500 14.500h4v4h-4z" fill="#ffb900" />
        </svg>
      </button>
      <button aria-label="Mail" className={slot}>
        <svg viewBox="0 0 24 22" className="h-[22px] w-6">
          <path d="M0 7 12 0l12 7v14H0z" fill="#0f64b8" />
          <path d="M2 6h20v7H2z" fill="#fff" />
          <path d="m0 7 12 8 12-8v14H0z" fill="#2c9cf0" />
        </svg>
      </button>
      <button aria-label="Skype" className={slot}>
        <span className="rounded-full bg-[radial-gradient(#fff_55%,transparent_60%)]">
          <FaSkype className="size-6 text-[#1aa6ea]" />
        </span>
      </button>
      <button aria-label="24" className={slot}>
        <span className="flex size-6 items-center justify-center rounded-full border-2 border-[#bfe8fb] bg-[#3bb6ef]">
          <span className="rounded-full bg-white px-0.5 text-[9px] leading-3 font-bold text-[#1d4e74]">24</span>
        </span>
      </button>
      <button aria-label="Chrome" className="flex h-10 w-[46px] items-center justify-center border-b-2 border-[#76b9ed] bg-[#4c5a66]">
        <svg viewBox="0 0 24 24" className="size-[23px]">
          <circle cx="12" cy="12" r="11.500" fill="#f9c525" />
          <path d="M12 12 2 6A11.500 11.500 0 0 1 22 6.300z" fill="#e2463a" />
          <path d="M2 6a11.500 11.500 0 0 0 9 17.500l6-9z" fill="#34a551" />
          <path d="M12 6.500h10.200A11.500 11.500 0 0 1 11 23.500l6-9z" fill="#f9c525" />
          <circle cx="12" cy="12" r="5.500" fill="#fff" />
          <circle cx="12" cy="12" r="4.300" fill="#4285f4" />
        </svg>
      </button>
      <div className="ml-auto flex items-center text-[13px] whitespace-nowrap">
        <svg viewBox="0 0 22 20" className="h-5 w-[22px]" aria-hidden="true">
          <path d="M11 1c4 5 4 11-3 15 6 3 12 0 12-6 0-4-4-8-9-9z" fill="#fcc82f" />
          <path d="M1 18c0-3 3-4 5-2 2-4 7-2 7 0 3-1 5 0 5 2z" fill="#e7d2b8" />
        </svg>
        <span className="ml-2.5">29°C</span>
        <span className="ml-2.5">Smoke</span>
        <ChevronUp className="ml-3.5 size-[18px]" />
        <svg viewBox="0 0 16 16" className="ml-2 size-4" aria-hidden="true">
          <path d="M0 0h16v16H0z" fill="#373b35" />
          <path d="M2 2v12M2 2l4 3 4-2 3 4-4 1v4l4 2M5 14h8" stroke="#79d42e" strokeWidth="1.500" strokeDasharray="3 1" fill="none" />
        </svg>
        <svg viewBox="0 0 16 14" className="ml-2 h-3.5 w-4" fill="none" stroke="#fff" aria-hidden="true">
          <path d="M4 1.500h11.500v8H4M8 9.500v3.500M5 13h8M.5.5h3V4h-3zM2 4v9" />
        </svg>
        <Volume2 className="ml-2 size-[18px]" strokeWidth={1.500} />
        <span className="ml-2 text-xs">ENG</span>
        <span className="ml-3 flex flex-col items-center text-[11px] leading-[18px]">
          <span>07:27 PM</span>
          <span>26-10-2021</span>
        </span>
        <svg viewBox="0 0 16 18" className="ml-[18px] h-[18px] w-4" fill="none" stroke="#fff" strokeWidth="1.300" aria-hidden="true">
          <path d="M.7 1h14.600v12h-4.800L8 16l-2.500-3H.7z" />
        </svg>
        <span className="mr-1.5 ml-[18px] h-10 w-px bg-[#56627a]" />
      </div>
    </footer>
  );
}

export default function App() {
  return (
    <div className="flex h-screen flex-col overflow-hidden font-['Liberation_Sans',Arial,sans-serif]">
      <header className={`shrink-0 ${ui}`}>
        <TabStrip />
        <Toolbar />
        <Bookmarks />
      </header>
      <div className="flex min-h-0 flex-1 bg-[#d8dbe0]">
        <main className="relative flex flex-1 gap-[29px] overflow-hidden pt-1.5 pl-[7px]">
          <LeftColumn />
          <RightColumn />
          <PaymentDialog />
        </main>
        <ScrollBar />
      </div>
      <TaskBar />
    </div>
  );
}
